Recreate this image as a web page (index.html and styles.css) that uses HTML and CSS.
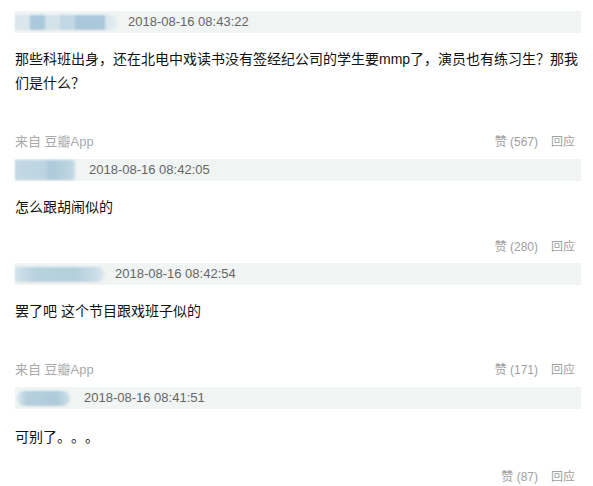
FILE: index.html
```html
<!DOCTYPE html>
<html lang="zh-CN">
<head>
<meta charset="utf-8">
<title>评论</title>
<link rel="stylesheet" href="styles.css">
</head>
<body>
<div class="comments">
  <div class="comment">
    <div class="meta"><span class="name n1"></span><span class="time">2018-08-16 08:43:22</span></div>
    <p class="content">那些科班出身，还在北电中戏读书没有签经纪公司的学生要mmp了，演员也有练习生？那我们是什么？</p>
    <div class="footer has-source"><span class="source">来自 豆瓣App</span><span class="actions"><a>赞 (567)</a><a>回应</a></span></div>
  </div>
  <div class="comment">
    <div class="meta"><span class="name n2"></span><span class="time">2018-08-16 08:42:05</span></div>
    <p class="content">怎么跟胡闹似的</p>
    <div class="footer"><span class="source"></span><span class="actions"><a>赞 (280)</a><a>回应</a></span></div>
  </div>
  <div class="comment">
    <div class="meta"><span class="name n3"></span><span class="time">2018-08-16 08:42:54</span></div>
    <p class="content">罢了吧 这个节目跟戏班子似的</p>
    <div class="footer has-source"><span class="source">来自 豆瓣App</span><span class="actions"><a>赞 (171)</a><a>回应</a></span></div>
  </div>
  <div class="comment">
    <div class="meta"><span class="name n4"></span><span class="time">2018-08-16 08:41:51</span></div>
    <p class="content content-last">可别了。。。</p>
    <div class="footer"><span class="source"></span><span class="actions"><a>赞 (87)</a><a>回应</a></span></div>
  </div>
</div>
</body>
</html>
```

FILE: styles.css
```css
html, body {
  margin: 0;
  padding: 0;
  background: #ffffff;
}

body {
  font-family: "Liberation Sans", "Noto Sans CJK SC", sans-serif;
  color: #111111;
  padding: 11px 0 0 15px;
}

.comments {
  width: 566px;
}

.comment {
  margin-bottom: 9px;
}

.comment:nth-child(2) {
  margin-bottom: 8px;
}

.meta {
  height: 22px;
  background: #f0f4f3;
  display: flex;
  align-items: center;
}

.name {
  height: 15px;
  border-radius: 0 8px 8px 0;
  filter: blur(0.8px);
  flex: none;
}

.n1 {
  width: 102px;
  margin-right: 11px;
  background: linear-gradient(90deg,
    #d9e6ec 0, #d9e6ec 15px,
    #aac9dc 15px, #aac9dc 30px,
    #d4e3ea 30px, #d4e3ea 45px,
    #c2d8e4 45px, #c2d8e4 60px,
    #a9c8db 60px, #a9c8db 90px,
    #d6e5eb 90px, #e3edf1 102px);
}

.n2 {
  width: 60px;
  height: 20px;
  margin-right: 14px;
  border-radius: 0 3px 3px 0;
  background: linear-gradient(90deg,
    #c3d9e5 0, #bcd5e2 30px,
    #acc9da 34px, #b8d2e0 52px, #c9dde7 60px);
}

.n3 {
  width: 90px;
  margin-right: 10px;
  background: linear-gradient(90deg,
    #d3e3ea 0, #b9d2df 20px, #b5cfdd 60px, #c8dce6 80px, #dfebf0 90px);
}

.n4 {
  width: 53px;
  margin-left: 2px;
  margin-right: 14px;
  border-radius: 8px;
  background: linear-gradient(90deg,
    #d8e6ec 0, #b5cfdd 10px, #aecbdb 40px, #d0e1e9 53px);
}

.time {
  font-size: 13px;
  color: #666666;
  line-height: 22px;
}

.content {
  margin: 14px 0 0 0;
  font-size: 14px;
  line-height: 24px;
  color: #111111;
  text-spacing-trim: space-all;
  font-feature-settings: "halt" 0, "chws" 0;
}

.content-last {
  margin-top: 16px;
}

.footer {
  display: flex;
  justify-content: space-between;
  align-items: center;
  height: 20px;
  margin-top: 16px;
  padding-right: 6px;
}

.footer.has-source {
  margin-top: 35px;
}

.source {
  font-size: 13px;
  color: #aaaaaa;
}

.actions {
  display: flex;
  gap: 13px;
  font-size: 12px;
  color: #a0a0a0;
}

.actions a {
  color: #a0a0a0;
  text-decoration: none;
}
```
